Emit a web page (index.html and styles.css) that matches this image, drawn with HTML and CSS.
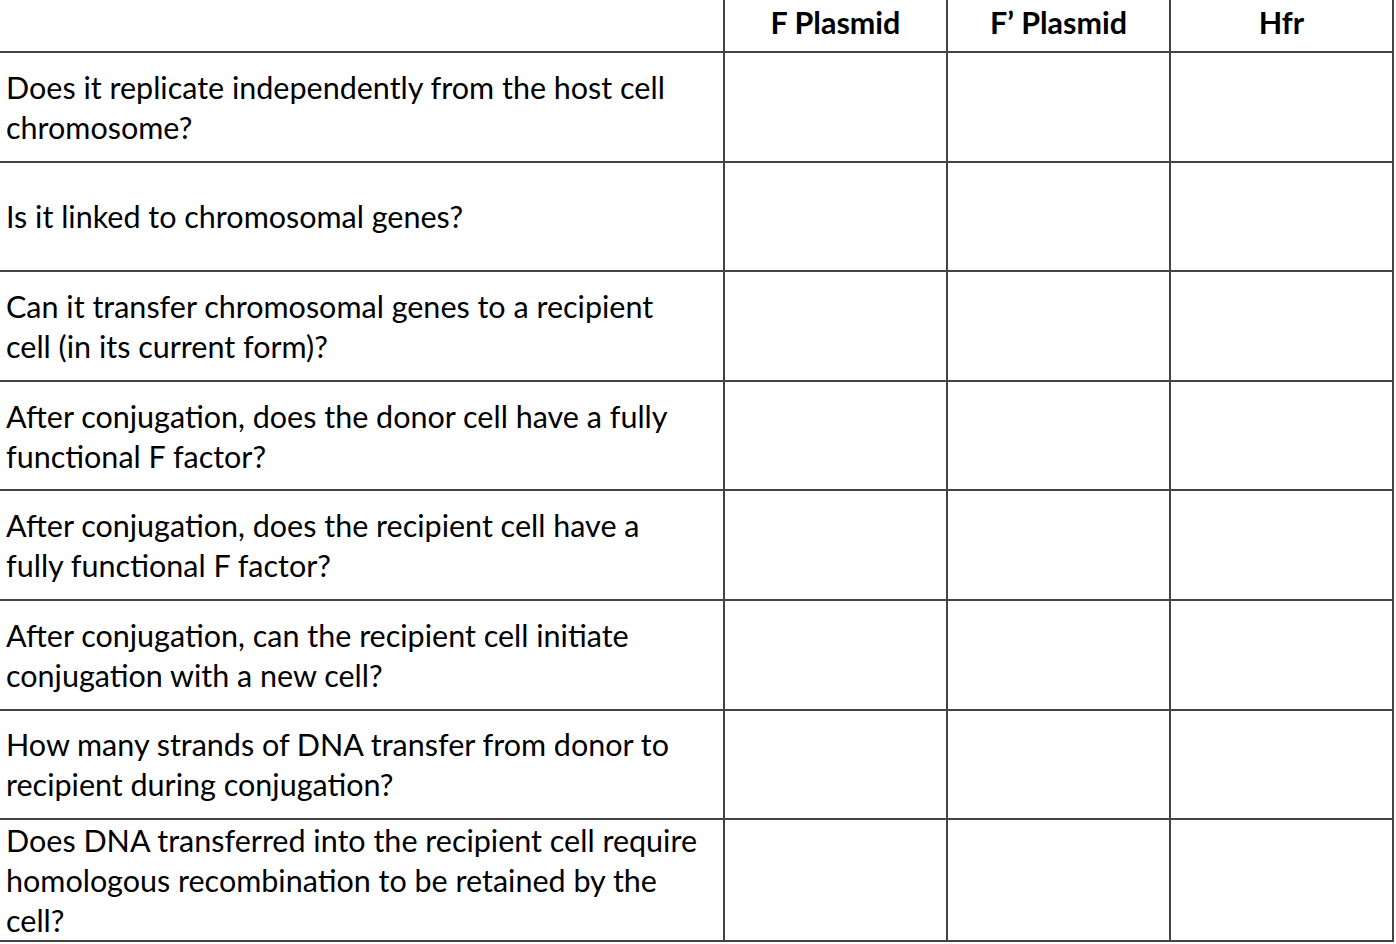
FILE: index.html
```html
<!DOCTYPE html>
<html>
<head>
<meta charset="utf-8">
<link rel="stylesheet" href="styles.css">
</head>
<body>
<table class="grid">
  <colgroup>
    <col class="c-q"><col class="c-a"><col class="c-a"><col class="c-a">
  </colgroup>
  <thead>
    <tr class="head">
      <th class="corner"></th>
      <th>F Plasmid</th>
      <th>F’ Plasmid</th>
      <th>Hfr</th>
    </tr>
  </thead>
  <tbody>
    <tr><td class="q">Does it replicate independently from the host cell chromosome?</td><td></td><td></td><td></td></tr>
    <tr><td class="q">Is it linked to chromosomal genes?</td><td></td><td></td><td></td></tr>
    <tr><td class="q">Can it transfer chromosomal genes to a recipient cell (in its current form)?</td><td></td><td></td><td></td></tr>
    <tr><td class="q">After conjugation, does the donor cell have a fully functional F factor?</td><td></td><td></td><td></td></tr>
    <tr><td class="q">After conjugation, does the recipient cell have a fully functional F factor?</td><td></td><td></td><td></td></tr>
    <tr><td class="q">After conjugation, can the recipient cell initiate conjugation with a new cell?</td><td></td><td></td><td></td></tr>
    <tr><td class="q">How many strands of DNA transfer from donor to recipient during conjugation?</td><td></td><td></td><td></td></tr>
    <tr class="last"><td class="q">Does DNA transferred into the recipient cell require homologous recombination to be retained by the cell?</td><td></td><td></td><td></td></tr>
  </tbody>
</table>
</body>
</html>
```
FILE: styles.css
```css
html, body {
  margin: 0;
  padding: 0;
  background: #fff;
}
body {
  font-family: Lato, "Open Sans", "Liberation Sans", sans-serif;
  color: #000;
}
.grid {
  border-collapse: collapse;
  table-layout: fixed;
  width: 1393px;
}
.c-q { width: 724px; }
.c-a { width: 223px; }
.grid th, .grid td {
  border: 2px solid #444;
  padding: 0;
}
.grid tr > :first-child { border-left: none; }
.head th {
  border-top: none;
  height: 52px;
  font-size: 30.5px;
  font-weight: 700;
  text-align: center;
  vertical-align: middle;
  padding-bottom: 8px;
  box-sizing: border-box;
}
.grid td {
  height: 107.6px;
  vertical-align: middle;
}
.grid td.q {
  font-size: 30.5px;
  line-height: 40px;
  padding: 0 18px 0 6px;
  text-align: left;
}
```
